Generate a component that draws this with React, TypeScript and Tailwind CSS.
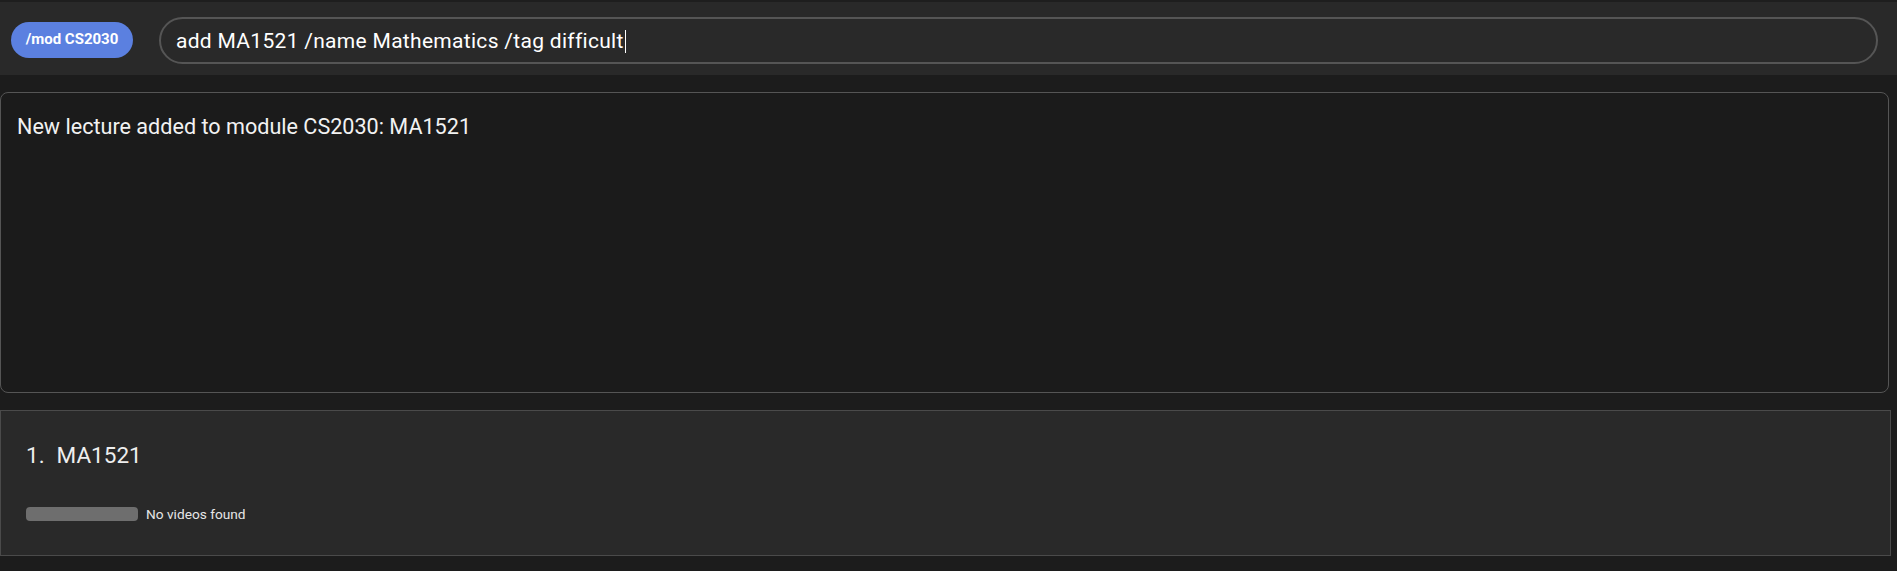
import React from "react";

export default function App() {
  return (
    <div
      className="w-[1897px] h-[571px] bg-[#1c1c1c] overflow-hidden flex flex-col"
      style={{ fontFamily: "Roboto, 'Noto Sans', sans-serif" }}
    >
      {/* header */}
      <div className="h-[75px] bg-[#292929] border-t-2 border-[#1e1e1e] flex items-center pl-[11px] pr-[19px] shrink-0">
        <div className="h-[36px] w-[122px] rounded-full bg-[#5b80e0] flex items-center justify-center text-white font-bold text-[15px] mt-[2px]">
          /mod CS2030
        </div>
        <div className="ml-[26px] flex-1 h-[47px] rounded-full border-2 border-[#555555] flex items-center pl-[15px] mt-[3px]">
          <span className="text-white text-[21px] tracking-[0.3px] leading-[24px] mt-[1px]">
            add MA1521 /name Mathematics /tag difficult
          </span>
          <span className="w-[1px] h-[23px] bg-white ml-[1px] mt-[2px]" />
        </div>
      </div>

      {/* output */}
      <div className="mt-[17px] w-[1889px] h-[301px] rounded-[8px] border border-[#555555] bg-[#1b1b1b] pt-[21px] pl-[16px] shrink-0">
        <div className="text-[#f2f2f2] text-[21.6px] leading-[26px]">
          New lecture added to module CS2030: MA1521
        </div>
      </div>

      {/* list */}
      <div className="mt-[17px] w-[1891px] h-[146px] border border-[#4a4a4a] bg-[#292929] pl-[25px] pt-[30px] shrink-0">
        <div className="flex items-center text-[#eeeeee] text-[22.5px] leading-[28px] gap-[12px]">
          <span>1.</span>
          <span>MA1521</span>
        </div>
        <div className="mt-[35px] flex items-center">
          <div className="w-[112px] h-[14px] rounded-[4px] bg-[#6e6e6e]" />
          <span className="ml-[8px] text-[13.7px] text-[#e6e6e6] leading-[20px]">No videos found</span>
        </div>
      </div>
    </div>
  );
}
